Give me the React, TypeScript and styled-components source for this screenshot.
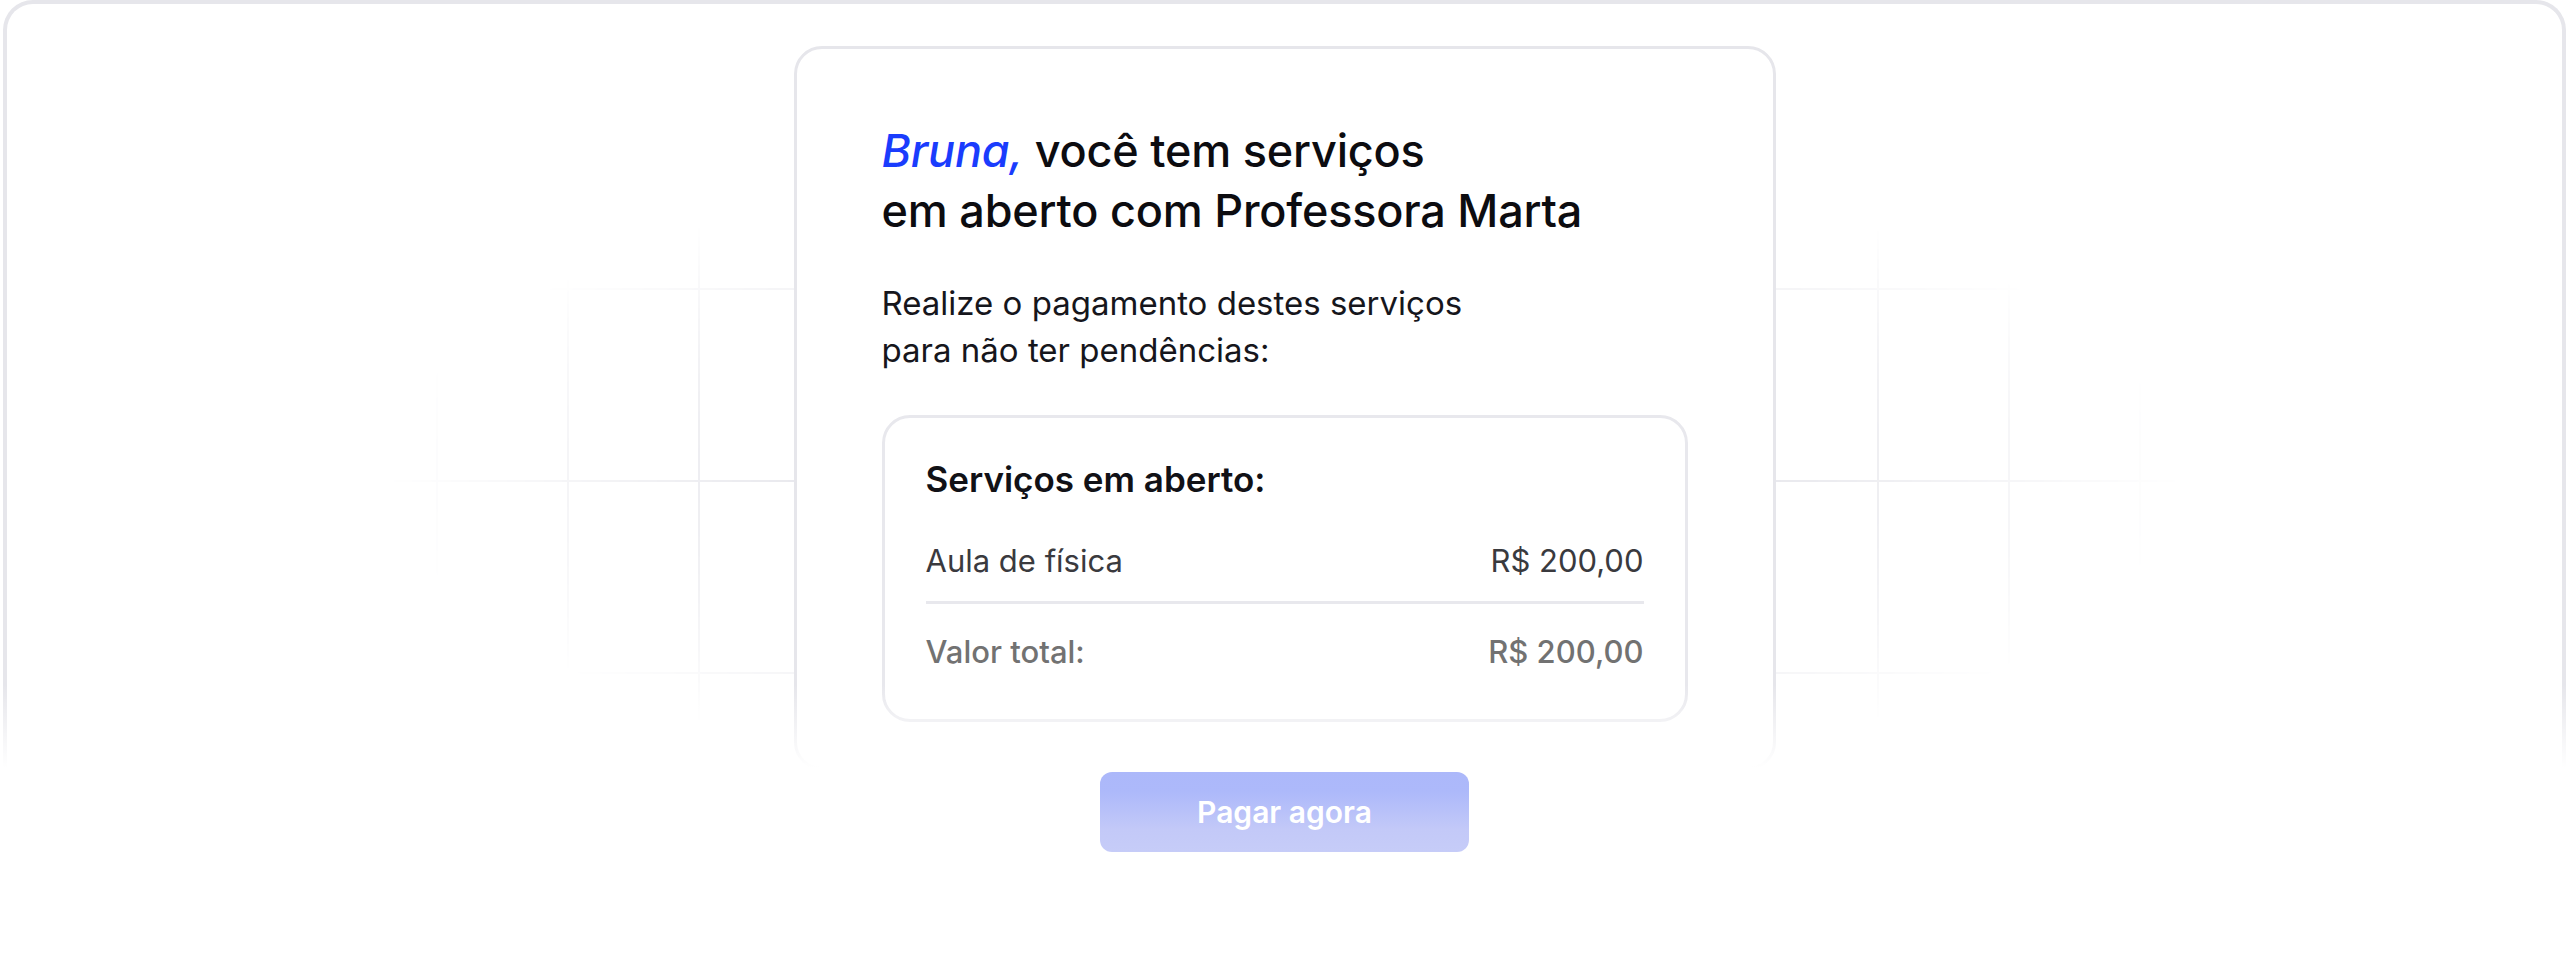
import React from "react";
import styled, { createGlobalStyle } from "styled-components";

const services = [{ id: 1, title: "Aula de física", price: "R$ 200,00" }];

const GlobalStyle = createGlobalStyle`
  html, body {
    margin: 0;
    padding: 0;
    background: #ffffff;
  }
  body {
    font-family: Inter, "Noto Sans", sans-serif;
    color: #0f0f14;
  }
`;

const Page = styled.div`
  height: 960px;
  padding: 0 3px;
  box-sizing: border-box;
  overflow: hidden;
`;

const Frame = styled.section`
  position: relative;
  height: 880px;
  border: 4px solid #e6e6eb;
  border-bottom: none;
  border-radius: 30px 30px 0 0;
  box-sizing: border-box;
  display: flex;
  flex-direction: column;
  align-items: center;
  padding-top: 42px;

  /* faint grid behind the card */
  &::before {
    content: "";
    position: absolute;
    inset: 0;
    background-image: linear-gradient(to right, #e7e7ec 2px, transparent 2px),
      linear-gradient(to bottom, #e7e7ec 2px, transparent 2px);
    background-size: 131px 192px;
    background-position: 36px 92px;
    -webkit-mask-image: radial-gradient(ellipse 900px 330px at 50% 470px, #000 50%, transparent 100%);
    mask-image: radial-gradient(ellipse 900px 330px at 50% 470px, #000 50%, transparent 100%);
    pointer-events: none;
  }

  /* bottom fade to white */
  &::after {
    content: "";
    position: absolute;
    left: -6px;
    right: -6px;
    top: 680px;
    bottom: 0;
    background: linear-gradient(to bottom, rgba(255, 255, 255, 0) 0px, #ffffff 84px);
    pointer-events: none;
    z-index: 2;
  }
`;

const Card = styled.div`
  position: relative;
  z-index: 1;
  width: 982px;
  height: 724px;
  flex-shrink: 0;
  box-sizing: border-box;
  background: #ffffff;
  border: 3px solid #e6e6eb;
  border-radius: 28px;
  padding: 72px 85px 0;
`;

const Title = styled.h1`
  margin: 0;
  font-size: 45px;
  line-height: 60px;
  font-weight: 500;
  letter-spacing: -0.2px;
  color: #0c0c10;
`;

const Name = styled.em`
  color: #1a3cfd;
  font-style: italic;
`;

const Lead = styled.p`
  margin: 39px 0 0;
  font-size: 33px;
  line-height: 47px;
  font-weight: 400;
  color: #16161c;
`;

const Summary = styled.div`
  margin-top: 41px;
  border: 3px solid #e8e8ed;
  border-radius: 28px;
  padding: 41px 41px 47px;
`;

const SummaryTitle = styled.h2`
  margin: 0 0 42px;
  font-size: 35px;
  line-height: 40px;
  font-weight: 600;
  color: #111116;
`;

const Row = styled.div<{ $muted?: boolean }>`
  display: flex;
  justify-content: space-between;
  align-items: center;
  font-size: 31px;
  line-height: 40px;
  font-weight: ${(p) => (p.$muted ? 500 : 400)};
  color: ${(p) => (p.$muted ? "#727272" : "#3a3a3e")};
`;

const Divider = styled.hr`
  margin: 20px 0 28px;
  border: none;
  height: 3px;
  background: #e8e8ed;
`;

const PayButton = styled.button`
  position: relative;
  z-index: 3;
  margin-top: 2px;
  width: 369px;
  height: 80px;
  border: none;
  border-radius: 12px;
  background: linear-gradient(to bottom, #acb8fa 0%, #adb9fa 25%, #c3c9f8 72%, #c6ccf8 100%);
  color: #ffffff;
  font-family: Inter, "Noto Sans", sans-serif;
  font-size: 30px;
  font-weight: 600;
  cursor: pointer;
`;

export default function App() {
  return (
    <>
      <GlobalStyle />
      <Page>
        <Frame>
          <Card>
            <Title>
              <Name>Bruna,</Name> você tem serviços
              <br />
              em aberto com Professora Marta
            </Title>
            <Lead>
              Realize o pagamento destes serviços
              <br />
              para não ter pendências:
            </Lead>
            <Summary>
              <SummaryTitle>Serviços em aberto:</SummaryTitle>
              {services.map((item) => (
                <Row key={item.id}>
                  <span>{item.title}</span>
                  <span>{item.price}</span>
                </Row>
              ))}
              <Divider />
              <Row $muted>
                <span>Valor total:</span>
                <span>R$ 200,00</span>
              </Row>
            </Summary>
          </Card>
          <PayButton>Pagar agora</PayButton>
        </Frame>
      </Page>
    </>
  );
}
